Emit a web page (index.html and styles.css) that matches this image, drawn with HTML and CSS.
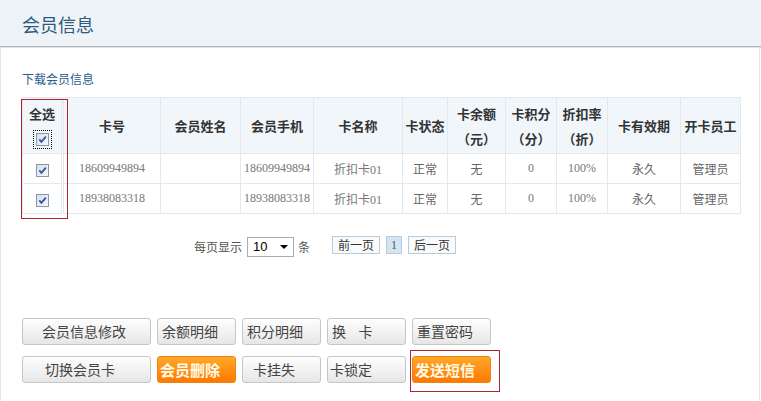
FILE: index.html
```html
<!DOCTYPE html>
<html lang="zh-CN">
<head>
    <meta charset="UTF-8">
    <title>会员信息</title>
    <link rel="stylesheet" href="styles.css">
</head>
<body>
    <div class="title-bar">
        <h2>会员信息</h2>
    </div>
    <div class="main">
        <a class="download" href="#">下载会员信息</a>

        <div class="grid-wrap">
            <table class="grid">
                <colgroup>
                    <col style="width:40px"><col style="width:98px"><col style="width:80px"><col style="width:73px">
                    <col style="width:89px"><col style="width:45px"><col style="width:58px"><col style="width:51px">
                    <col style="width:51px"><col style="width:73px"><col style="width:60px">
                </colgroup>
                <thead>
                    <tr>
                        <th class="first">全选<br><span class="chk focus"><svg viewBox="0 0 11 11"><path d="M2.3 5.4 L4.4 7.9 L8.9 2.6"/></svg></span></th>
                        <th>卡号</th>
                        <th>会员姓名</th>
                        <th>会员手机</th>
                        <th>卡名称</th>
                        <th>卡状态</th>
                        <th>卡余额<br>（元）</th>
                        <th>卡积分<br>（分）</th>
                        <th>折扣率<br>（折）</th>
                        <th>卡有效期</th>
                        <th>开卡员工</th>
                    </tr>
                </thead>
                <tbody>
                    <tr>
                        <td class="first"><span class="chk"><svg viewBox="0 0 11 11"><path d="M2.3 5.4 L4.4 7.9 L8.9 2.6"/></svg></span></td>
                        <td class="num">18609949894</td>
                        <td></td>
                        <td class="num">18609949894</td>
                        <td class="num">折扣卡01</td>
                        <td>正常</td>
                        <td>无</td>
                        <td class="num">0</td>
                        <td class="num">100%</td>
                        <td>永久</td>
                        <td>管理员</td>
                    </tr>
                    <tr>
                        <td class="first"><span class="chk"><svg viewBox="0 0 11 11"><path d="M2.3 5.4 L4.4 7.9 L8.9 2.6"/></svg></span></td>
                        <td class="num">18938083318</td>
                        <td></td>
                        <td class="num">18938083318</td>
                        <td class="num">折扣卡01</td>
                        <td>正常</td>
                        <td>无</td>
                        <td class="num">0</td>
                        <td class="num">100%</td>
                        <td>永久</td>
                        <td>管理员</td>
                    </tr>
                </tbody>
            </table>
            <div class="mark mark-col"></div>
        </div>

        <div class="pager">
            <span>每页显示</span>
            <div class="select"><span>10</span><span class="arrow"></span></div>
            <span class="unit">条</span>
            <div class="pages">
                <a class="page-btn" href="#">前一页</a>
                <a class="page-btn current" href="#">1</a>
                <a class="page-btn" href="#">后一页</a>
            </div>
        </div>

        <div class="actions">
            <div class="btn-row">
                <button type="button" class="btn btn-wide pad-19">会员信息修改</button>
                <button type="button" class="btn">余额明细</button>
                <button type="button" class="btn">积分明细</button>
                <button type="button" class="btn">换&nbsp;&nbsp;&nbsp;&nbsp;卡</button>
                <button type="button" class="btn">重置密码</button>
            </div>
            <div class="btn-row">
                <button type="button" class="btn btn-wide pad-22">切换会员卡</button>
                <button type="button" class="btn btn-orange">会员删除</button>
                <button type="button" class="btn pad-10">卡挂失</button>
                <button type="button" class="btn pad-2">卡锁定</button>
                <span class="mark-wrap">
                    <button type="button" class="btn btn-orange">发送短信</button>
                    <span class="mark mark-send"></span>
                </span>
            </div>
        </div>
    </div>
</body>
</html>
```

FILE: styles.css
```css
* {
    margin: 0;
    padding: 0;
    box-sizing: border-box;
}

body {
    font-family: "Noto Sans CJK SC", "Liberation Sans", sans-serif;
    font-size: 12px;
    color: #333;
    background: #fff;
}

.title-bar {
    height: 47px;
    background: #eef3f8;
    border-bottom: 1px solid #a9b4bc;
    box-shadow: 0 1px 0 #e1e6ea;
    padding: 2px 0 0 22px;
}

.title-bar h2 {
    font-size: 18px;
    font-weight: normal;
    color: #2d5a7f;
    line-height: 44px;
}

.main {
    width: 760px;
    height: 354px;
    border-left: 1px solid #e3e8ec;
    border-right: 1px solid #e3e8ec;
    padding: 23px 0 0 21px;
}

.download {
    display: block;
    color: #2a5d8c;
    text-decoration: none;
    line-height: 18px;
}

.grid-wrap {
    position: relative;
    width: 718px;
    margin-top: 9px;
}

.grid {
    width: 718px;
    table-layout: fixed;
    border-collapse: collapse;
}

.grid th,
.grid td {
    border: 1px solid #e3e8ec;
    text-align: center;
    padding: 0;
}

.grid th {
    height: 56px;
    background: #f1f6fa;
    font-size: 13px;
    font-weight: bold;
    line-height: 25px;
    color: #333;
}

.grid td {
    height: 30px;
    font-size: 12px;
    color: #666;
}

.grid .first {
    border-right: 3px double #e3e8ec;
}

.num {
    font-family: "Liberation Serif", "Noto Sans CJK SC", serif;
    color: #777;
}

.grid td.num {
    color: #777;
}

.chk {
    display: inline-block;
    width: 13px;
    height: 13px;
    border: 1px solid #8a99a7;
    background: linear-gradient(135deg, #d9dfe6, #f8f9fa);
    vertical-align: middle;
}

.chk svg {
    display: block;
    width: 11px;
    height: 11px;
}

.chk path {
    fill: none;
    stroke: #3152b0;
    stroke-width: 1.8;
}

.chk.focus {
    outline: 1px dotted #000;
    outline-offset: 2px;
}

.mark {
    position: absolute;
    border: 1px solid #ad2530;
    pointer-events: none;
}

.mark-col {
    left: -1px;
    top: 2px;
    width: 47px;
    height: 120px;
}

.pager {
    display: flex;
    align-items: center;
    height: 21px;
    margin-top: 22px;
    padding-left: 172px;
    color: #555;
}

.select {
    display: flex;
    align-items: center;
    width: 47px;
    height: 20px;
    margin-left: 5px;
    padding-left: 5px;
    border: 1px solid #a6adb3;
    font-family: "Liberation Sans", sans-serif;
    font-size: 13px;
    color: #000;
}

.arrow {
    margin: 0 5px 0 auto;
    border-left: 4px solid transparent;
    border-right: 4px solid transparent;
    border-top: 4px solid #000;
}

.unit {
    margin-left: 4px;
}

.pages {
    display: flex;
    align-self: flex-start;
    margin-left: 22px;
}

.page-btn {
    height: 18px;
    padding: 0 5px;
    margin-right: 6px;
    border: 1px solid #b9cbd8;
    background: #f8fafc;
    line-height: 16px;
    color: #333;
    text-decoration: none;
}

.page-btn.current {
    padding: 0 4px;
    background: #d3e5f3;
    border-color: #b5cde0;
    font-family: "Liberation Serif", serif;
    color: #555;
}

.actions {
    display: flex;
    flex-direction: column;
    gap: 11px;
    margin-top: 61px;
}

.btn-row {
    display: flex;
    gap: 6px;
}

.btn {
    width: 79px;
    height: 27px;
    padding-left: 4px;
    border: 1px solid #c6c6c6;
    border-radius: 3px;
    background: linear-gradient(#fefefe, #e6e6e6);
    font-family: "Noto Sans CJK SC", sans-serif;
    font-size: 14px;
    line-height: 25px;
    color: #444;
    text-align: left;
    white-space: nowrap;
    cursor: pointer;
}

.btn-wide {
    width: 129px;
}

.pad-19 { padding-left: 19px; }
.pad-22 { padding-left: 22px; }
.pad-10 { padding-left: 10px; }
.pad-2 { padding-left: 2px; }

.btn-orange {
    padding-left: 2px;
    border-color: #e8861a;
    background: linear-gradient(#ffa82a, #ff7800);
    font-size: 15px;
    font-weight: bold;
    color: #fffbe6;
}

.mark-wrap {
    position: relative;
    display: flex;
}

.mark-send {
    left: -2px;
    top: -6px;
    width: 90px;
    height: 42px;
}
```
